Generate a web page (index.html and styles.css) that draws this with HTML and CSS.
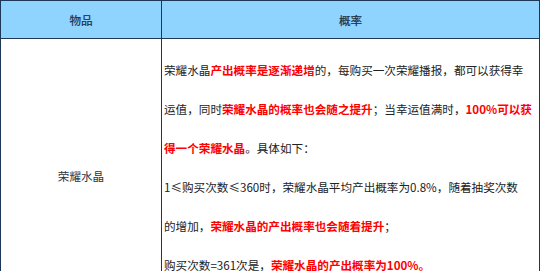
FILE: index.html
```html
<!DOCTYPE html>
<html lang="zh">
<head>
<meta charset="utf-8">
<link rel="stylesheet" href="styles.css">
</head>
<body>
<table class="rates">
  <thead>
    <tr>
      <th class="col-item">物品</th>
      <th class="col-rate">概率</th>
    </tr>
  </thead>
  <tbody>
    <tr>
      <td class="item">荣耀水晶</td>
      <td class="desc">
        <div class="line">荣耀水晶<b>产出概率是逐渐递增</b>的，每购买一次荣耀播报，都可以获得幸</div>
        <div class="line">运值，同时<b>荣耀水晶的概率也会随之提升</b>；当幸运值满时，<b>100%可以获</b></div>
        <div class="line"><b>得一个荣耀水晶</b>。具体如下：</div>
        <div class="line">1≤购买次数≤360时，荣耀水晶平均产出概率为0.8%，随着抽奖次数</div>
        <div class="line">的增加，<b>荣耀水晶的产出概率也会随着提升</b>；</div>
        <div class="line">购买次数=361次是，<b>荣耀水晶的产出概率为100%。</b></div>
      </td>
    </tr>
  </tbody>
</table>
</body>
</html>
```
FILE: styles.css
```css
html, body {
  margin: 0;
  padding: 0;
  background: #ffffff;
}
body {
  font-family: "Noto Sans CJK SC", "Noto Sans", sans-serif;
  font-size: 11.6px;
  color: #222;
}
.rates {
  border-collapse: collapse;
  width: 540px;
  table-layout: fixed;
}
.rates th,
.rates td {
  border: 1px solid #1c3856;
  padding: 0;
}
.rates th {
  background: #8fd3ff;
  height: 37px;
  font-weight: normal;
  color: #1a2f4a;
  text-align: center;
  vertical-align: middle;
  -webkit-text-stroke: 0.2px #1a2f4a;
}
.col-item {
  width: 160px;
}
.item {
  text-align: center;
  vertical-align: middle;
  color: #2d3440;
}
.desc {
  padding: 12px 0 28px 2px !important;
  vertical-align: top;
}
.line {
  line-height: 39px;
  white-space: nowrap;
}
.line b {
  color: #ff0000;
  font-weight: bold;
}
```
